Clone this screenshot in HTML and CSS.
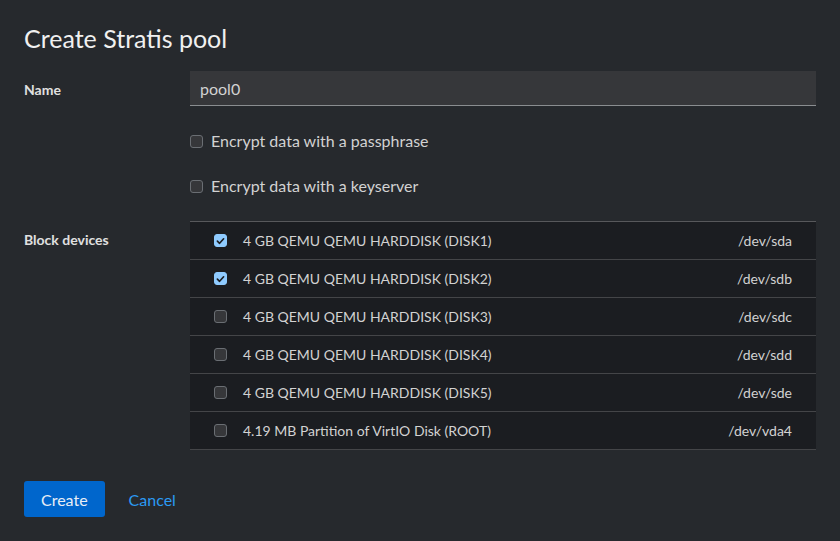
FILE: index.html
```html
<!DOCTYPE html>
<html>
<head>
<meta charset="utf-8">
<link rel="stylesheet" href="styles.css">
</head>
<body>
<div class="dialog">
  <h1 class="title">Create Stratis pool</h1>
  <div class="form">
    <div class="label">Name</div>
    <div class="field">
      <div class="input">pool0</div>
    </div>

    <div class="label"></div>
    <div class="field checks">
      <label class="check"><span class="box"></span>Encrypt data with a passphrase</label>
      <label class="check"><span class="box"></span>Encrypt data with a keyserver</label>
    </div>

    <div class="label label-devices">Block devices</div>
    <div class="field">
      <div class="table">
        <div class="row"><span class="box checked"><svg viewBox="0 0 12 12"><path d="M2.6 6.2 L5 8.5 L9.4 3.6" /></svg></span><span class="name">4 GB QEMU QEMU HARDDISK (DISK1)</span><span class="dev">/dev/sda</span></div>
        <div class="row"><span class="box checked"><svg viewBox="0 0 12 12"><path d="M2.6 6.2 L5 8.5 L9.4 3.6" /></svg></span><span class="name">4 GB QEMU QEMU HARDDISK (DISK2)</span><span class="dev">/dev/sdb</span></div>
        <div class="row"><span class="box"></span><span class="name">4 GB QEMU QEMU HARDDISK (DISK3)</span><span class="dev">/dev/sdc</span></div>
        <div class="row"><span class="box"></span><span class="name">4 GB QEMU QEMU HARDDISK (DISK4)</span><span class="dev">/dev/sdd</span></div>
        <div class="row"><span class="box"></span><span class="name">4 GB QEMU QEMU HARDDISK (DISK5)</span><span class="dev">/dev/sde</span></div>
        <div class="row"><span class="box"></span><span class="name">4.19 MB Partition of VirtIO Disk (ROOT)</span><span class="dev">/dev/vda4</span></div>
      </div>
    </div>
  </div>
  <div class="actions">
    <button class="btn-primary">Create</button>
    <button class="btn-link">Cancel</button>
  </div>
</div>
</body>
</html>
```

FILE: styles.css
```css
html, body {
  margin: 0;
  padding: 0;
  background: #26292d;
}
body {
  font-family: Lato, "Noto Sans", sans-serif;
  color: #e0e0e0;
  width: 840px;
  height: 541px;
  overflow: hidden;
}
.dialog {
  padding: 24px 24px 24px 24px;
}
.title {
  margin: 0;
  font-size: 25px;
  font-weight: 400;
  line-height: 29px;
  color: #f0f0f0;
}
.form {
  margin-top: 18px;
  display: grid;
  grid-template-columns: 166px 1fr;
  row-gap: 14px;
}
.label {
  font-size: 14px;
  font-weight: 700;
  color: #e0e0e0;
  padding-top: 10px;
}
.label-devices {
  padding-top: 19px;
}
.input {
  height: 35px;
  box-sizing: border-box;
  background: #36373a;
  border-bottom: 1px solid #8a8d90;
  padding: 0 10px;
  font-size: 16px;
  line-height: 35px;
  color: #d2d2d2;
}
.checks {
  display: flex;
  flex-direction: column;
  gap: 21px;
  padding-top: 9px;
}
.check {
  display: flex;
  align-items: center;
  font-size: 16px;
  line-height: 24px;
  color: #d2d2d2;
}
.box {
  width: 11px;
  height: 11px;
  border: 1px solid #6a6e73;
  border-radius: 3px;
  background: #36373a;
  margin-right: 8px;
  display: inline-flex;
  align-items: center;
  justify-content: center;
  flex: none;
}
.table {
  margin-top: 9px;
  background: #1b1d21;
  border-top: 1px solid #57585b;
}
.row {
  display: flex;
  align-items: center;
  height: 37px;
  border-bottom: 1px solid #444548;
  padding: 0 24px;
  font-size: 14px;
  color: #d2d2d2;
}
.row .box {
  margin-right: 16px;
}
.box.checked {
  background: #8fcbff;
  border-color: #8fcbff;
}
.box.checked svg {
  width: 12px;
  height: 12px;
}
.box.checked path {
  fill: none;
  stroke: #1b1d21;
  stroke-width: 1.8;
  stroke-linecap: round;
  stroke-linejoin: round;
}
.name {
  flex: 1;
}
.dev {
  text-align: right;
}
.actions {
  margin-top: 31px;
  display: flex;
  align-items: center;
  gap: 8px;
}
.btn-primary {
  font-family: Lato, "Noto Sans", sans-serif;
  background: #0066cc;
  color: #e8eef6;
  border: none;
  border-radius: 3px;
  height: 36px;
  padding: 0 17px;
  font-size: 16px;
}
.btn-link {
  font-family: Lato, "Noto Sans", sans-serif;
  background: none;
  border: none;
  color: #2b9af3;
  font-size: 16px;
  padding: 0 16px;
  height: 36px;
}
```
